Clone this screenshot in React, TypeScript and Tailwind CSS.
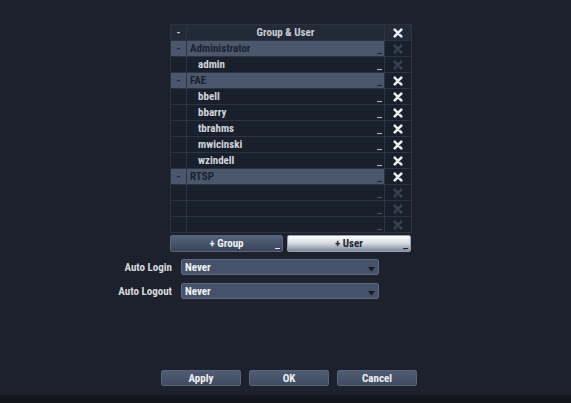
import React from "react";

const FONT = { fontFamily: '"Liberation Sans Narrow", "Roboto Condensed", "DejaVu Sans Condensed", Roboto, sans-serif' };

function XIcon({ dim }: { dim?: boolean }) {
  return (
    <svg width="10" height="10" viewBox="0 0 10 10">
      <path d="M1.7 1.7 L8.3 8.3 M8.3 1.7 L1.7 8.3" stroke={dim ? "#39424f" : "#eef0f4"} strokeWidth="2.6" strokeLinecap="round" />
    </svg>
  );
}

type Row = { kind: "group" | "user" | "empty"; name?: string; dim?: boolean };

const rows: Row[] = [
  { kind: "group", name: "Administrator", dim: true },
  { kind: "user", name: "admin", dim: true },
  { kind: "group", name: "FAE" },
  { kind: "user", name: "bbell" },
  { kind: "user", name: "bbarry" },
  { kind: "user", name: "tbrahms" },
  { kind: "user", name: "mwicinski" },
  { kind: "user", name: "wzindell" },
  { kind: "group", name: "RTSP" },
  { kind: "empty", dim: true },
  { kind: "empty", dim: true },
  { kind: "empty", dim: true },
];

function Marker({ color }: { color: string }) {
  return <div className={`w-[5px] h-px mb-[2px] mr-[2px] ${color}`} />;
}

export default function App() {
  return (
    <div className="w-[571px] h-[403px] bg-[#1c212b] flex flex-col text-[11px] leading-none font-bold" style={FONT}>
      <div className="flex-1 flex flex-col pt-[24px]">
        <div className="pl-[170px]">
          <div className="w-[242px] bg-[#2b3443] p-px grid grid-cols-[15px_197px_26px] auto-rows-[15px] gap-px">
            <div className="bg-[#232a37] flex items-center justify-center text-[#c8ccd4]">-</div>
            <div className="bg-[#232a37] flex items-center justify-center text-[#c8ccd4] text-[11px]">Group &amp; User</div>
            <div className="bg-[#232a37] flex items-center justify-center"><XIcon /></div>
            {rows.map((r, i) => (
              <React.Fragment key={i}>
                <div className={`${r.kind === "group" ? "bg-[#4a576d] text-[#1b2230]" : "bg-[#1a202b]"} flex items-center justify-center`}>
                  {r.kind === "group" ? "-" : ""}
                </div>
                <div className={`${r.kind === "group" ? "bg-[#4a576d]" : "bg-[#1a202b]"} flex justify-between items-end`}>
                  <div
                    className={`self-center text-[11px] ${r.kind === "group" ? "pl-[3px] text-[#1b2230]" : "pl-[11px] text-[#d0d4dc]"}`}
                  >
                    {r.name ?? ""}
                  </div>
                  <Marker color={r.kind === "group" ? "bg-[#1b2230]" : r.kind === "user" ? "bg-[#b8bdc6]" : "bg-[#4a5366]"} />
                </div>
                <div className="bg-[#1a202b] flex items-center justify-center">
                  <XIcon dim={r.dim} />
                </div>
              </React.Fragment>
            ))}
          </div>
          <div className="flex gap-[4px] mt-[2px] w-[241px]">
            <div className="w-[113px] h-[17px] rounded-[2px] border border-[#5a667e] bg-gradient-to-b from-[#55627a] to-[#3b4559] flex items-center justify-center text-[#eef0f4] text-[11px] relative">
              + Group
              <div className="absolute right-[2px] bottom-[2px] w-[5px] h-px bg-[#e0e3e8]" />
            </div>
            <div className="w-[124px] h-[17px] rounded-[2px] border border-[#9aa2b0] bg-gradient-to-b from-[#ffffff] via-[#d4d8df] to-[#7e8798] flex items-center justify-center text-[#1e2532] text-[11px] relative">
              + User
              <div className="absolute right-[2px] bottom-[2px] w-[5px] h-px bg-[#1e2532]" />
            </div>
          </div>
        </div>
        <div className="flex flex-col gap-[8px] mt-[7px]">
          {["Auto Login", "Auto Logout"].map((l) => (
            <div key={l} className="flex items-center h-[16px]">
              <div className="w-[172px] text-right text-[#d6d9df] text-[11px]">{l}</div>
              <div className="ml-[9px] w-[198px] h-[16px] rounded-[2px] border border-[#5d6981] bg-[#46526a] flex items-center justify-between pl-[3px] pr-[3px] text-[#f2f3f5] text-[11px]">
                <span>Never</span>
                <svg width="7" height="5" viewBox="0 0 7 5" className="mt-[4px]"><path d="M0 0 L7 0 L3.5 4.5 Z" fill="#151a24" /></svg>
              </div>
            </div>
          ))}
        </div>
        <div className="mt-auto mb-[9px] flex gap-[8px] pl-[161px]">
          {["Apply", "OK", "Cancel"].map((b) => (
            <div key={b} className="w-[80px] h-[16px] rounded-[2px] border border-[#5a667e] bg-gradient-to-b from-[#4f5b73] to-[#414c62] flex items-center justify-center text-[#eef0f4] text-[11px]">
              {b}
            </div>
          ))}
        </div>
      </div>
      <div className="h-[8px] bg-[#13161d]" />
    </div>
  );
}
